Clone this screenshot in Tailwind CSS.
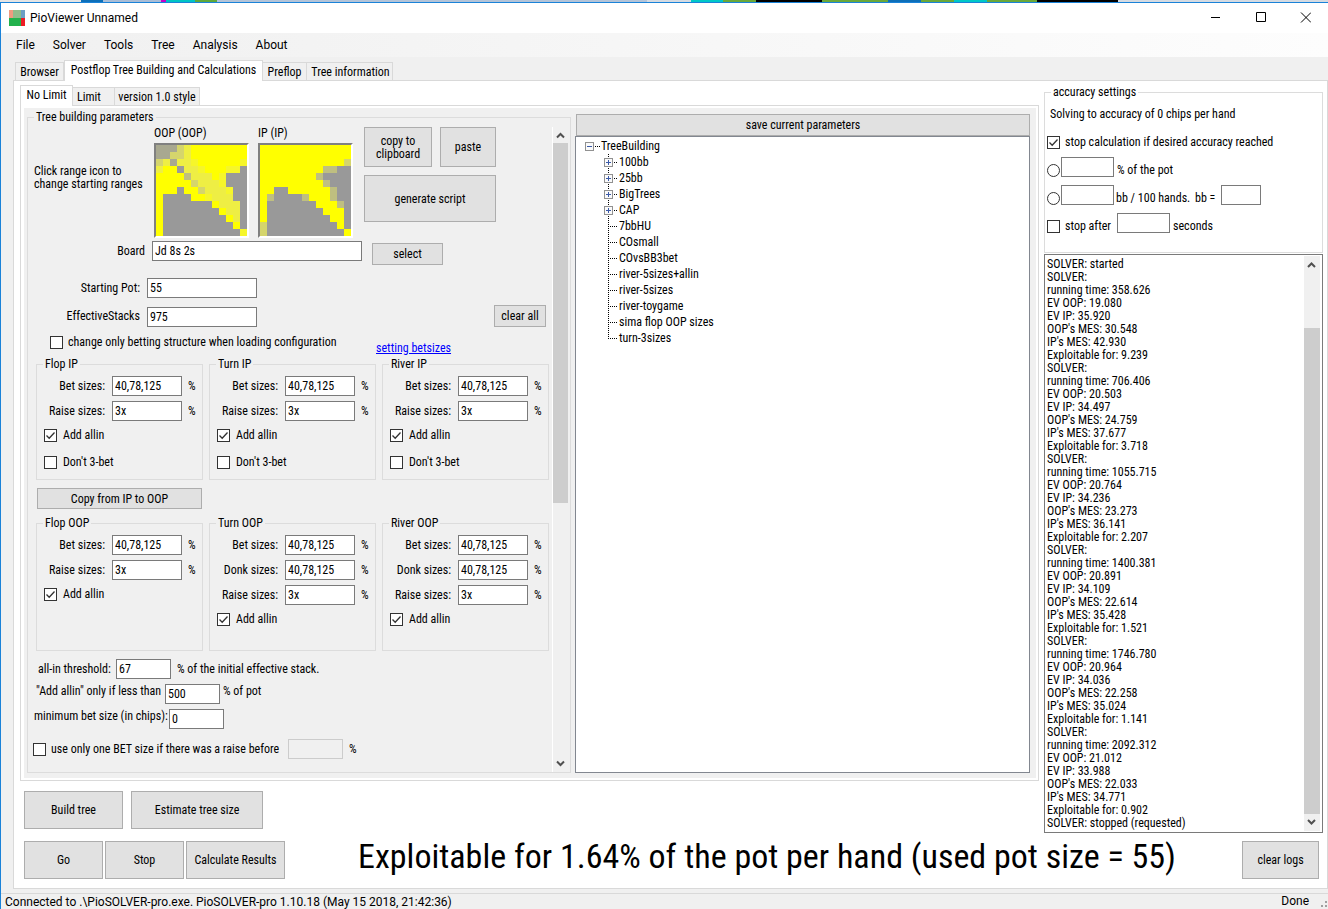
<!DOCTYPE html>
<html lang="en">
<head>
    <meta charset="UTF-8">
    <meta name="viewport" content="width=device-width, initial-scale=1.0">
    <title>PioViewer Unnamed</title>
    <script src="https://cdn.jsdelivr.net/npm/@tailwindcss/browser@4"></script>
</head>
<body class="h-screen overflow-hidden flex flex-col bg-[#f0f0f0] text-black text-[12px] leading-[13px] font-['Roboto_Condensed','Roboto','Liberation_Sans',sans-serif]">

    <!-- Sliver of the window behind -->
    <div class="flex h-[2px] shrink-0 bg-[#d5dbe2]">
        <span class="w-[81px] bg-[#e4e4e4]"></span>
        <span class="w-[22px] bg-[#0d6fb8]"></span>
        <span class="w-[58px] bg-[#a9bdd6]"></span>
        <span class="w-[5px] bg-[#c800c8]"></span>
        <span class="w-[29px] bg-[#00c4c4]"></span>
        <span class="w-[22px] bg-[#5fa83a]"></span>
        <span class="w-[430px] bg-[#b4c4d8]"></span>
        <span class="w-[44px]"></span>
        <span class="w-[32px] bg-[#00c8c8]"></span>
        <span class="w-[33px] bg-[#6aa83a]"></span>
        <span class="w-[66px] bg-black"></span>
        <span class="w-[66px] bg-[#6aa83a]"></span>
        <span class="w-[33px] bg-[#0d6fb8]"></span>
        <span class="w-[33px] bg-[#6aa83a]"></span>
        <span class="w-[33px] bg-[#00c8c8]"></span>
        <span class="w-[50px] bg-[#6aa83a]"></span>
        <span class="w-[81px] bg-black"></span>
    </div>

    <div class="flex flex-1 flex-col min-h-0 border-t border-l border-[#1a82d8]">

        <!-- Title bar -->
        <header class="flex h-[30px] shrink-0 items-center bg-white pb-px pl-2 font-['Roboto','Noto_Sans',sans-serif] text-[12px]">
            <svg class="size-4" viewBox="0 0 16 16" shape-rendering="crispEdges">
                <path fill="#ef9a80" d="M0 0h4v8H0z"/>
                <path fill="#90bd8c" d="M4 0h8v8H4z"/>
                <path fill="#6c9fc4" d="M12 0h4v8h-4z"/>
                <path fill="#22b14c" d="M0 8h12v8H0z"/>
                <path fill="#ed1c24" d="M12 8h4v8h-4z"/>
            </svg>
            <h1 class="ml-[5px] flex-1 pt-[2px]">PioViewer Unnamed</h1>
            <button class="flex w-[45px] justify-center" aria-label="Minimize"><svg class="size-[11px]" viewBox="0 0 11 11" stroke="#000"><path d="M1 5.500h9"/></svg></button>
            <button class="flex w-[45px] justify-center" aria-label="Maximize"><svg class="size-[11px]" viewBox="0 0 11 11" fill="none" stroke="#000"><path d="M1.500.5h9v9h-9z"/></svg></button>
            <button class="flex w-[45px] justify-center" aria-label="Close"><svg class="size-[11px]" viewBox="0 0 11 11" stroke="#000"><path d="M1 .5l10 10M11 .5l-10 10"/></svg></button>
        </header>

        <!-- Menu -->
        <nav class="flex h-[24px] shrink-0 items-center gap-[18px] bg-linear-to-r from-[#f0f0f0] to-[#fdfdfd] pl-[15px] font-['Roboto','Noto_Sans',sans-serif] text-[12px]">
            <button>File</button>
            <button>Solver</button>
            <button>Tools</button>
            <button>Tree</button>
            <button>Analysis</button>
            <button>About</button>
        </nav>

        <!-- Main tabs -->
        <div class="flex shrink-0 items-end pt-[3px] pl-[14px]" role="tablist">
            <button role="tab" class="h-[18px] w-[49px] border border-b-0 border-[#d9d9d9] pt-[2px]">Browser</button>
            <button role="tab" class="relative z-10 -mb-px h-[21px] w-[199px] border border-b-0 border-[#d9d9d9] bg-white pb-px" aria-selected="true">Postflop Tree Building and Calculations</button>
            <button role="tab" class="h-[18px] w-[43px] border-t border-[#d9d9d9] pt-[2px]">Preflop</button>
            <button role="tab" class="h-[18px] w-[87px] border border-b-0 border-[#d9d9d9] pt-[2px] pl-[2px]">Tree information</button>
        </div>

        <main class="ml-[12px] flex min-h-0 flex-1 flex-col border border-[#d9d9d9] bg-white pb-[9px]">
            <div class="flex min-h-0 flex-1 gap-[5px] pl-[6px] pr-[4px]">

                <!-- Left side: tree building -->
                <div class="flex min-w-0 flex-1 flex-col pt-[4px]">
                    <div class="flex shrink-0 items-end" role="tablist">
                        <button role="tab" class="relative z-10 -mb-px h-[21px] w-[53px] border border-b-0 border-[#d9d9d9] bg-white pb-px" aria-selected="true">No Limit</button>
                        <button role="tab" class="h-[18px] w-[41px] border-t border-[#d9d9d9] bg-[#f0f0f0] pt-[2px] pr-[9px]">Limit</button>
                        <button role="tab" class="h-[18px] w-[86px] border border-b-0 border-[#d9d9d9] bg-[#f0f0f0] pt-[2px]">version 1.0 style</button>
                    </div>
                    <div class="flex min-h-0 flex-1 border border-[#d9d9d9] p-[2px] pl-[3px]">
                        <div class="flex min-w-0 flex-1 gap-[4px] bg-[#f0f0f0] pt-[3px] pr-[6px] pb-[5px] pl-[3px]">

                            <fieldset class="flex w-[544px] shrink-0 border border-[#dcdcdc] pl-[2px] pr-[2px]">
                                <legend class="ml-[4px] px-[2px]">Tree building parameters</legend>
                                <div class="flex h-full">
                                    <div class="w-[522px]">

                                        <!-- Ranges and script buttons -->
                                        <div class="flex pt-[3px] pl-[4px]">
                                            <p class="mt-[38px] w-[120px]">Click range icon to<br>change starting ranges</p>
                                            <div class="w-[104px]">
                                                <label for="oop">OOP (OOP)</label>
                                                <button id="oop" class="mt-[3px] block size-[95px] border-2 border-t-[#808080] border-l-[#808080] border-r-white border-b-white" data-range="oop"></button>
                                            </div>
                                            <div class="w-[106px]">
                                                <label for="ip">IP (IP)</label>
                                                <button id="ip" class="mt-[3px] block size-[95px] border-2 border-t-[#808080] border-l-[#808080] border-r-white border-b-white" data-range="ip"></button>
                                            </div>
                                            <div class="grid grid-cols-[68px_56px] grid-rows-[40px_47px] gap-2">
                                                <button class="border border-[#adadad] bg-[#e1e1e1] pt-px">copy to<br>clipboard</button>
                                                <button class="border border-[#adadad] bg-[#e1e1e1] pt-px">paste</button>
                                                <button class="col-span-2 border border-[#adadad] bg-[#e1e1e1] pt-px">generate script</button>
                                            </div>
                                        </div>

                                        <div class="mt-[3px] flex items-start">
                                            <label for="board" class="mt-[4px] w-[115px] text-right">Board</label>
                                            <input id="board" value="Jd 8s 2s" class="ml-[7px] h-[20px] w-[210px] border border-[#7a7a7a] bg-white px-[2px]">
                                            <button class="mt-[2px] ml-[10px] h-[22px] w-[71px] border border-[#adadad] bg-[#e1e1e1]">select</button>
                                        </div>

                                        <div class="mt-[13px] flex items-center">
                                            <label for="pot" class="w-[110px] text-right">Starting Pot:</label>
                                            <input id="pot" value="55" class="ml-[7px] h-[20px] w-[110px] border border-[#7a7a7a] bg-white px-[2px]">
                                        </div>
                                        <div class="mt-[7px] flex items-end">
                                            <label for="stacks" class="mb-[4px] w-[110px] text-right">EffectiveStacks</label>
                                            <input id="stacks" value="975" class="ml-[7px] h-[20px] w-[110px] border border-[#7a7a7a] bg-white px-[2px]">
                                            <button class="ml-auto mr-[6px] h-[22px] w-[52px] border border-[#adadad] bg-[#e1e1e1]">clear all</button>
                                        </div>

                                        <div class="mt-[8px] flex h-[23px] pl-[20px]">
                                            <label class="flex h-[14px] w-[326px] items-center gap-[5px]">
                                                <input type="checkbox" class="size-[13px] appearance-none border border-[#333] bg-white">
                                                change only betting structure when loading configuration
                                            </label>
                                            <a href="#" class="mt-[7px] text-[#0000ff] underline">setting betsizes</a>
                                        </div>

                                        <div id="ip-groups" class="flex gap-[6px] pl-[6px]"></div>
                                        <button class="mt-[8px] ml-[7px] block h-[21px] w-[165px] border border-[#adadad] bg-[#e1e1e1] pt-px">Copy from IP to OOP</button>
                                        <div id="oop-groups" class="mt-[8px] flex gap-[6px] pl-[6px]"></div>

                                        <!-- Thresholds -->
                                        <div class="mt-[8px] flex items-center pl-[8px] whitespace-nowrap">
                                            <label for="threshold" class="w-[78px]">all-in threshold:</label>
                                            <input id="threshold" value="67" class="h-[20px] w-[55px] border border-[#7a7a7a] bg-white px-[2px]">
                                            <span class="ml-[6px]">% of the initial effective stack.</span>
                                        </div>
                                        <div class="mt-[5px] flex pl-[6px] whitespace-nowrap">
                                            <label for="allin-max" class="w-[129px] pt-px">"Add allin" only if less than</label>
                                            <input id="allin-max" value="500" class="h-[20px] w-[55px] border border-[#7a7a7a] bg-white px-[2px]">
                                            <span class="ml-[3px] pt-px">% of pot</span>
                                        </div>
                                        <div class="mt-[5px] flex pl-[4px] whitespace-nowrap">
                                            <label for="min-bet" class="w-[135px] pt-px">minimum bet size (in chips):</label>
                                            <input id="min-bet" value="0" class="h-[20px] w-[55px] border border-[#7a7a7a] bg-white px-[2px]">
                                        </div>
                                        <div class="mt-[10px] flex items-center pl-[3px] whitespace-nowrap">
                                            <label class="flex w-[255px] items-center gap-[5px]">
                                                <input type="checkbox" class="size-[13px] appearance-none border border-[#333] bg-white">
                                                use only one BET size if there was a raise before
                                            </label>
                                            <input disabled aria-label="Raise limit" class="h-[20px] w-[55px] border border-[#ccc] bg-[#f0f0f0]">
                                            <span class="ml-[6px]">%</span>
                                        </div>
                                    </div>

                                    <!-- Scrollbar -->
                                    <div class="mt-[3px] flex w-[16px] flex-col items-center border-l border-white">
                                        <svg class="h-[16px] w-[15px] shrink-0" viewBox="0 0 15 16" fill="none" stroke="#505050" stroke-width="2"><path d="M4 10.500l3.500-3.500 3.500 3.500"/></svg>
                                        <div class="h-[360px] w-full bg-[#cdcdcd]"></div>
                                        <svg class="mt-auto h-[16px] w-[15px] shrink-0" viewBox="0 0 15 16" fill="none" stroke="#505050" stroke-width="2"><path d="M4 5.500l3.500 3.500 3.500-3.500"/></svg>
                                    </div>
                                </div>
                            </fieldset>

                            <!-- Saved configurations -->
                            <div class="flex min-w-0 flex-1 flex-col pt-[3px]">
                                <button class="ml-px h-[22px] shrink-0 border border-[#adadad] bg-[#e1e1e1] pt-px">save current parameters</button>
                                <div class="min-h-0 flex-1 border border-[#828790] bg-white pt-px pl-[9px]">
                                    <div class="flex h-4 items-center">
                                        <svg class="h-4 w-4" viewBox="0 0 16 16" fill="none" shape-rendering="crispEdges">
                                            <path stroke="#000" stroke-dasharray="1 1" d="M10 8.500h5"/>
                                            <rect x=".5" y="4.500" width="8" height="8" fill="#fafafa" stroke="#919191"/>
                                            <path stroke="#3b5aa8" d="M2 8.500h5"/>
                                        </svg>
                                        TreeBuilding
                                    </div>
                                    <ul id="tree" class="pl-[19px]"></ul>
                                </div>
                            </div>
                        </div>
                    </div>

                    <div class="mt-[10px] mb-[4px] flex shrink-0 gap-2 pl-[4px]">
                        <button class="h-[38px] w-[99px] border border-[#adadad] bg-[#e1e1e1]">Build tree</button>
                        <button class="h-[38px] w-[132px] border border-[#adadad] bg-[#e1e1e1]">Estimate tree size</button>
                    </div>
                </div>

                <!-- Right side: accuracy and log -->
                <div class="flex w-[279px] shrink-0 flex-col pt-[5px]">
                    <fieldset class="h-[167px] shrink-0 border border-[#dcdcdc] pl-[2px]">
                        <legend class="ml-[4px] px-[2px]">accuracy settings</legend>
                        <p class="mt-[9px] ml-[3px]">Solving to accuracy of 0 chips per hand</p>
                        <label class="mt-[15px] flex items-center gap-[5px]">
                            <span class="relative size-[13px]">
                                <input type="checkbox" checked class="block size-[13px] appearance-none border border-[#333] bg-white">
                                <svg class="pointer-events-none absolute inset-0" viewBox="0 0 13 13" fill="none" stroke="#333" stroke-width="1.300"><path d="M2.500 6.500l2.700 2.800 5.300-5.800"/></svg>
                            </span>
                            stop calculation if desired accuracy reached
                        </label>
                        <div class="mt-[8px] flex items-center">
                            <input type="radio" name="accuracy" aria-label="Percent of the pot" class="mt-[7px] mr-px size-[13px] appearance-none rounded-full border border-[#333] bg-white">
                            <input id="pct" class="h-[20px] w-[53px] border border-[#7a7a7a] bg-white px-[2px]">
                            <label for="pct" class="mt-[6px] ml-[3px]">% of the pot</label>
                        </div>
                        <div class="mt-[8px] flex items-center">
                            <input type="radio" name="accuracy" aria-label="bb per 100 hands" class="mt-[7px] mr-px size-[13px] appearance-none rounded-full border border-[#333] bg-white">
                            <input id="bb100" class="h-[20px] w-[53px] border border-[#7a7a7a] bg-white px-[2px]">
                            <label for="bb100" class="mt-[6px] ml-[2px] w-[76px]">bb / 100 hands.</label>
                            <label for="bb" class="mt-[6px] ml-[3px] w-[26px]">bb =</label>
                            <input id="bb" class="h-[20px] w-[40px] border border-[#7a7a7a] bg-white px-[2px]">
                        </div>
                        <div class="mt-[8px] flex items-center">
                            <label class="mt-[6px] flex w-[70px] items-center gap-[5px]">
                                <input type="checkbox" class="size-[13px] appearance-none border border-[#333] bg-white">
                                stop after
                            </label>
                            <input id="seconds" class="h-[20px] w-[53px] border border-[#7a7a7a] bg-white px-[2px]">
                            <label for="seconds" class="mt-[6px] ml-[3px]">seconds</label>
                        </div>
                    </fieldset>

                    <div class="mt-px flex min-h-0 flex-1 border border-[#7a7a7a] py-px pr-[2px]">
                        <textarea id="log" readonly aria-label="Solver log" class="flex-1 resize-none overflow-hidden pt-[2px] pl-[2px] whitespace-pre outline-none"></textarea>
                        <div class="flex w-[16px] flex-col bg-[#f0f0f0]">
                            <svg class="h-[17px] w-[15px] shrink-0" viewBox="0 0 15 16" fill="none" stroke="#505050" stroke-width="2"><path d="M4 10.500l3.500-3.500 3.500 3.500"/></svg>
                            <div class="mt-[55px] min-h-0 flex-1 bg-[#cdcdcd]"></div>
                            <svg class="h-[17px] w-[15px] shrink-0" viewBox="0 0 15 16" fill="none" stroke="#505050" stroke-width="2"><path d="M4 5.500l3.500 3.500 3.500-3.500"/></svg>
                        </div>
                    </div>
                </div>
            </div>

            <!-- Run controls -->
            <div class="mt-[8px] flex h-[38px] shrink-0 items-center gap-[2px] pl-[10px] pr-[8px]">
                <button class="h-[38px] w-[79px] border border-[#adadad] bg-[#e1e1e1]">Go</button>
                <button class="h-[38px] w-[79px] border border-[#adadad] bg-[#e1e1e1]">Stop</button>
                <button class="h-[38px] w-[99px] border border-[#adadad] bg-[#e1e1e1]">Calculate Results</button>
                <p class="ml-[71px] flex-1 pb-[8px] whitespace-nowrap text-[34px] leading-[38px]">Exploitable for 1.64% of the pot per hand (used pot size = 55)</p>
                <button class="h-[38px] w-[77px] border border-[#adadad] bg-[#e1e1e1]">clear logs</button>
            </div>
        </main>

        <!-- Status bar -->
        <footer class="mt-[4px] flex h-[16px] shrink-0 items-start border-t border-[#d9d9d9] pl-[4px] font-['Roboto','Noto_Sans',sans-serif] text-[12px] leading-[15px]">
            <span class="flex-1 pt-px leading-[14px]">Connected to .\PioSOLVER-pro.exe. PioSOLVER-pro 1.10.18 (May 15 2018, 21:42:36)</span>
            <span class="mr-[10px]">Done</span>
            <svg class="mt-[7px] h-[8px] w-[9px]" viewBox="0 0 9 8" fill="#a0a0a0"><path d="M6 0h2v2H6zM2 4h2v2H2zM6 4h2v2H6z"/></svg>
        </footer>
    </div>

    <script>
        // 13x13 hand grids, one letter per cell
        const COLORS = { Y: '#ffff00', F: '#f6f62a', E: '#eeee44', D: '#d5d56c', C: '#bfbf80', A: '#a8a890', G: '#999999' };
        const RANGES = {
            oop: [
                'AAADEYYYYYYYY', 'AADDEYYYYYYYY', 'DEAEEFYYYYYYF', 'EYYGEEFYYYFFG', 'YYYYCEEEYFGGG',
                'YYYYYDEEEFGGG', 'YYYGYYDEEEFGG', 'YGGGGYYFEEEGG', 'YGGGGGGGYEEEG', 'YGGGGGGGGYEEG',
                'YGGGGGGGGGYEG', 'YGGGGGGGGGGYG', 'YGGGGGGGGGGGF'
            ],
            ip: [
                'YYYYYYYYYYYYY', 'YYYYYYYYYYYYY', 'YYYYYYYYYYYYD', 'YYYYYYYYYCCGG', 'YYYYYYYYCGGGG',
                'YYYYYYYYYCGGG', 'YYGGYYYYYYCGG', 'YCGGGGCYYYCGG', 'YGGGGGGGYYYCG', 'YGGGGGGGGYYYG',
                'YGGGGGGGGGYYG', 'DGGGGGGGGGGYG', 'DGGGGGGGGGGGY'
            ]
        };
        document.querySelectorAll('[data-range]').forEach(el => {
            const cells = RANGES[el.dataset.range].map((row, y) =>
                [...row].map((c, x) => `<rect x="${x}" y="${y}" width="1" height="1" fill="${COLORS[c]}"/>`).join('')
            ).join('');
            el.innerHTML = `<svg class="block size-[91px]" viewBox="0 0 13 13" shape-rendering="crispEdges">${cells}</svg>`;
        });

        // Bet size groups
        function sizeRow(group, name, value) {
            const id = (group + '-' + name).toLowerCase().replace(/ /g, '-');
            return `<div class="mb-[5px] flex items-center">
                <label for="${id}" class="mr-[7px] w-[68px] text-right">${name} sizes:</label>
                <input id="${id}" value="${value}" class="h-[20px] w-[70px] border border-[#7a7a7a] bg-white px-[2px]">
                <span class="ml-[6px]">%</span>
            </div>`;
        }
        function check(text, checked) {
            return `<label class="mb-[14px] ml-[7px] flex items-center gap-[6px]">
                <span class="relative size-[13px]">
                    <input type="checkbox" ${checked ? 'checked' : ''} class="block size-[13px] appearance-none border border-[#333] bg-white">
                    ${checked ? '<svg class="pointer-events-none absolute inset-0" viewBox="0 0 13 13" fill="none" stroke="#333" stroke-width="1.300"><path d="M2.500 6.500l2.700 2.800 5.300-5.800"/></svg>' : ''}
                </span>${text}</label>`;
        }
        function group(title, rows, checks, height) {
            return `<fieldset class="${height} w-[167px] border border-[#dcdcdc]">
                <legend class="ml-[6px] px-[2px]">${title}</legend>
                <div class="mt-[5px]">${rows.map(r => sizeRow(title, r[0], r[1])).join('')}</div>
                <div class="mt-[8px]">${checks.join('')}</div>
            </fieldset>`;
        }
        const bet = ['Bet', '40,78,125'], donk = ['Donk', '40,78,125'], raise = ['Raise', '3x'];
        document.getElementById('ip-groups').innerHTML = ['Flop IP', 'Turn IP', 'River IP']
            .map(t => group(t, [bet, raise], [check('Add allin', true), check("Don't 3-bet", false)], 'h-[122px]')).join('');
        document.getElementById('oop-groups').innerHTML =
            group('Flop OOP', [bet, raise], [check('Add allin', true)], 'h-[134px]') +
            ['Turn OOP', 'River OOP'].map(t => group(t, [bet, donk, raise], [check('Add allin', true)], 'h-[134px]')).join('');

        // Saved trees: the first four are folders
        const trees = ['100bb', '25bb', 'BigTrees', 'CAP', '7bbHU', 'COsmall', 'COvsBB3bet', 'river-5sizes+allin',
            'river-5sizes', 'river-toygame', 'sima flop OOP sizes', 'turn-3sizes'];
        document.getElementById('tree').innerHTML = trees.map((name, i) => {
            const end = i === trees.length - 1 ? 9 : 16;
            const box = i < 4 ? '<rect x=".5" y="4.500" width="8" height="8" fill="#fafafa" stroke="#919191"/><path stroke="#3b5aa8" d="M2 8.500h5M4.500 6v5"/>' : '';
            return `<li class="flex h-4 items-center"><svg class="h-4 w-[15px]" viewBox="0 0 15 16" fill="none" shape-rendering="crispEdges">
                <path stroke="#000" stroke-dasharray="1 1" d="M4.500 0v${end}M4 8.500h9"/>${box}</svg>${name}</li>`;
        }).join('');

        // Solver log: time, EV OOP, EV IP, OOP's MES, IP's MES, exploitability
        const steps = [
            ['358.626', '19.080', '35.920', '30.548', '42.930', '9.239'],
            ['706.406', '20.503', '34.497', '24.759', '37.677', '3.718'],
            ['1055.715', '20.764', '34.236', '23.273', '36.141', '2.207'],
            ['1400.381', '20.891', '34.109', '22.614', '35.428', '1.521'],
            ['1746.780', '20.964', '34.036', '22.258', '35.024', '1.141'],
            ['2092.312', '21.012', '33.988', '22.033', '34.771', '0.902']
        ];
        document.getElementById('log').value = ['SOLVER: started']
            .concat(steps.map(s => `SOLVER:\nrunning time: ${s[0]}\nEV OOP: ${s[1]}\nEV IP: ${s[2]}\nOOP's MES: ${s[3]}\nIP's MES: ${s[4]}\nExploitable for: ${s[5]}`))
            .concat('SOLVER: stopped (requested)').join('\n');
    </script>
</body>
</html>
